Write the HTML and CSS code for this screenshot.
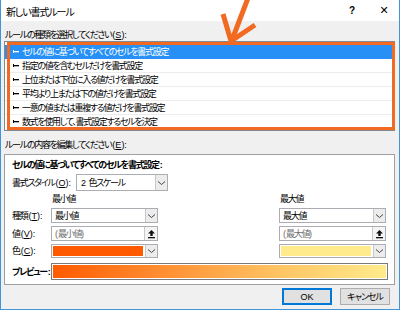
FILE: index.html
```html
<!DOCTYPE html>
<html lang="ja">
<head>
<meta charset="utf-8">
<link rel="stylesheet" href="styles.css">
</head>
<body>
<div class="window">
  <div class="titlebar">
    <span class="title">新しい書式ルール</span>
    <span class="help">?</span>
    <span class="close">✕</span>
  </div>
  <div class="body">
    <div class="label first">ルールの種類を選択してください<span class="lat">(<u>S</u>):</span></div>
    <div class="list-wrap">
      <div class="listbox">
        <div class="row selected"><svg class="bullet" width="6" height="5" viewBox="0 0 6 5"><rect x="0" y="1" width="1" height="3" fill="currentColor"/><rect x="0" y="2" width="6" height="1.3" fill="currentColor"/></svg>セルの値に基づいてすべてのセルを書式設定</div>
        <div class="row"><svg class="bullet" width="6" height="5" viewBox="0 0 6 5"><rect x="0" y="1" width="1" height="3" fill="currentColor"/><rect x="0" y="2" width="6" height="1.3" fill="currentColor"/></svg>指定の値を含むセルだけを書式設定</div>
        <div class="row"><svg class="bullet" width="6" height="5" viewBox="0 0 6 5"><rect x="0" y="1" width="1" height="3" fill="currentColor"/><rect x="0" y="2" width="6" height="1.3" fill="currentColor"/></svg>上位または下位に入る値だけを書式設定</div>
        <div class="row"><svg class="bullet" width="6" height="5" viewBox="0 0 6 5"><rect x="0" y="1" width="1" height="3" fill="currentColor"/><rect x="0" y="2" width="6" height="1.3" fill="currentColor"/></svg>平均より上または下の値だけを書式設定</div>
        <div class="row"><svg class="bullet" width="6" height="5" viewBox="0 0 6 5"><rect x="0" y="1" width="1" height="3" fill="currentColor"/><rect x="0" y="2" width="6" height="1.3" fill="currentColor"/></svg>一意の値または重複する値だけを書式設定</div>
        <div class="row last"><svg class="bullet" width="6" height="5" viewBox="0 0 6 5"><rect x="0" y="1" width="1" height="3" fill="currentColor"/><rect x="0" y="2" width="6" height="1.3" fill="currentColor"/></svg>数式を使用して、書式設定するセルを決定</div>
      </div>
      <div class="highlight"></div>
    </div>
    <div class="label second">ルールの内容を編集してください<span class="lat">(<u>E</u>):</span></div>
    <div class="panel">
      <div class="heading">セルの値に基づいてすべてのセルを書式設定<span class="lat">:</span></div>
      <div class="style-row">
        <span class="style-label">書式スタイル<span class="lat">(<u>O</u>):</span></span>
        <div class="combo style-combo"><span class="combo-text"><span class="lat">2 </span>色スケール</span><span class="chev"><svg width="9" height="6" viewBox="0 0 9 6"><path d="M1 1.5 L4.5 4.5 L8 1.5" fill="none" stroke="#444" stroke-width="1"/></svg></span></div>
      </div>
      <div class="grid">
        <span></span>
        <span class="colhead">最小値</span>
        <span></span>
        <span class="colhead">最大値</span>

        <span class="rowlabel">種類<span class="lat">(<u>T</u>):</span></span>
        <div class="combo"><span class="combo-text">最小値</span><span class="chev"><svg width="9" height="6" viewBox="0 0 9 6"><path d="M1 1.5 L4.5 4.5 L8 1.5" fill="none" stroke="#444" stroke-width="1"/></svg></span></div>
        <span></span>
        <div class="combo"><span class="combo-text">最大値</span><span class="chev"><svg width="9" height="6" viewBox="0 0 9 6"><path d="M1 1.5 L4.5 4.5 L8 1.5" fill="none" stroke="#444" stroke-width="1"/></svg></span></div>

        <span class="rowlabel">値<span class="lat">(<u>V</u>):</span></span>
        <div class="combo input"><span class="combo-text ph"><span class="lat">(</span>最小値<span class="lat">)</span></span><span class="upbtn"><svg width="9" height="10" viewBox="0 0 9 10"><path d="M4.5 1 L1 4.5 H3.3 V7 H5.7 V4.5 H8 Z" fill="#111"/><rect x="1" y="8" width="7" height="1.3" fill="#111"/></svg></span></div>
        <span></span>
        <div class="combo input"><span class="combo-text ph"><span class="lat">(</span>最大値<span class="lat">)</span></span><span class="upbtn"><svg width="9" height="10" viewBox="0 0 9 10"><path d="M4.5 1 L1 4.5 H3.3 V7 H5.7 V4.5 H8 Z" fill="#111"/><rect x="1" y="8" width="7" height="1.3" fill="#111"/></svg></span></div>

        <span class="rowlabel">色<span class="lat">(<u>C</u>):</span></span>
        <div class="combo color"><span class="swatch min"></span><span class="chev"><svg width="9" height="6" viewBox="0 0 9 6"><path d="M1 1.5 L4.5 4.5 L8 1.5" fill="none" stroke="#444" stroke-width="1"/></svg></span></div>
        <span></span>
        <div class="combo color"><span class="swatch max"></span><span class="chev"><svg width="9" height="6" viewBox="0 0 9 6"><path d="M1 1.5 L4.5 4.5 L8 1.5" fill="none" stroke="#444" stroke-width="1"/></svg></span></div>
      </div>
      <div class="preview-row">
        <span class="preview-label">プレビュー<span class="lat">:</span></span>
        <div class="preview-bar"><div class="gradient"></div></div>
      </div>
    </div>
    <div class="buttons">
      <button class="btn default">OK</button>
      <button class="btn">キャンセル</button>
    </div>
  </div>
  <svg class="callout" width="60" height="50" viewBox="200 0 60 50">
    <g fill="none" stroke="#f26a21" stroke-width="5" stroke-linecap="butt" stroke-linejoin="miter">
      <path d="M247 -2 L231 40"/>
      <path d="M222 14 L230 41 L254 25"/>
    </g>
  </svg>
</div>
</body>
</html>
```

FILE: styles.css
```css
* { box-sizing: border-box; }
html, body { margin: 0; padding: 0; }
body {
  width: 400px;
  height: 310px;
  overflow: hidden;
  font-family: "Noto Sans CJK JP", "Noto Sans", sans-serif;
  font-feature-settings: "palt";
  font-size: 9px;
  letter-spacing: -1.3px;
  color: #000;
}
.lat { letter-spacing: 0; font-family: "Liberation Sans", "Noto Sans CJK JP", sans-serif; padding-left: 1px; }
u { text-decoration: underline; text-underline-offset: 1px; }
.window {
  position: relative;
  width: 400px;
  height: 310px;
  border: 1px solid #3e95dc;
  border-top: none;
  background: #f0f0f0;
  display: flex;
  flex-direction: column;
}
.titlebar {
  height: 21px;
  background: #fff;
  display: flex;
  align-items: center;
  padding: 0 0 0 5px;
}
.title { font-size: 10px; letter-spacing: -1.1px; flex: 1; padding-top: 1px; white-space: nowrap; }
.help { width: 30px; text-align: center; font-size: 10px; letter-spacing: 0; font-family: "Liberation Sans", sans-serif; font-weight: bold; margin-right: 2px; }
.close { width: 30px; text-align: center; font-size: 11px; letter-spacing: 0; font-family: "DejaVu Sans", sans-serif; }
.body {
  flex: 1;
  display: flex;
  flex-direction: column;
  padding: 0 3px 0 3px;
}
.label { height: 12px; line-height: 12px; padding-left: 1px; white-space: nowrap; }
.label.first { margin-top: 8px; }
.list-wrap { position: relative; width: 391px; }
.listbox {
  background: #fff;
  border: 1px solid #828790;
  height: 90px;
  padding-top: 3px;
}
.row {
  height: 14px;
  line-height: 13px;
  padding-left: 8px;
  border-bottom: 1px solid #ececec;
  white-space: nowrap;
}
.row.last { border-bottom: none; }
.row.selected { background: #2690f6; color: #fff; border-bottom-color: #2690f6; }
.bullet { display: inline-block; margin-right: 3px; vertical-align: 1px; }
.highlight {
  position: absolute;
  left: 3px;
  top: 1px;
  width: 388px;
  height: 88px;
  border: 3px solid #f26a21;
}
.label.second { margin-top: 8px; }
.panel {
  margin-top: 3px;
  width: 391px;
  height: 131px;
  background: #fff;
  border: 1px solid #a0a0a0;
  padding: 4px 0 0 7px;
  display: flex;
  flex-direction: column;
}
.heading { font-weight: bold; height: 12px; line-height: 12px; white-space: nowrap; }
.heading .lat, .preview-label .lat { font-weight: bold; }
.style-row { display: flex; align-items: center; margin-top: 3px; height: 17px; }
.style-label { width: 64px; white-space: nowrap; }
.combo {
  height: 15px;
  border: 1px solid #abadb3;
  background: #fff;
  display: flex;
  align-items: stretch;
}
.style-combo { width: 92px; height: 17px; }
.combo-text { flex: 1; padding-left: 3px; line-height: 13px; white-space: nowrap; overflow: hidden; }
.combo-text .lat { padding-left: 0; }
.style-combo .combo-text { line-height: 15px; padding-left: 4px; }
.combo-text.ph { color: #6d6d6d; }
.chev {
  width: 12px;
  background: #ececec;
  border-left: 1px solid #c8c8c8;
  display: flex;
  align-items: center;
  justify-content: center;
}
.upbtn {
  width: 13px;
  border-left: 1px solid #c8c8c8;
  background: #f4f4f4;
  display: flex;
  align-items: center;
  justify-content: center;
}
.grid {
  display: grid;
  grid-template-columns: 39px 107px 121px 107px;
  grid-template-rows: 12px 15px 15px 14px;
  row-gap: 3px;
  margin-top: 2px;
  align-items: center;
}
.grid .colhead { padding-left: 1px; line-height: 12px; white-space: nowrap; }
.grid .rowlabel { line-height: 15px; white-space: nowrap; }
.combo.color { height: 14px; }
.swatch { flex: 1; margin: 1px 2px 1px 1px; }
.swatch.min { background: #ff5a00; }
.swatch.max { background: #ffeb8c; }
.preview-row { display: flex; align-items: center; margin-top: 5px; height: 17px; }
.preview-label { width: 39px; font-weight: bold; white-space: nowrap; }
.preview-bar {
  width: 337px;
  height: 17px;
  border: 1px solid #7a7a7a;
  padding: 1px;
  background: #fff;
}
.gradient {
  height: 100%;
  background: linear-gradient(to right, #ff5a00 0%, #ff8a2e 30%, #ffc060 65%, #ffeb8c 100%);
}
.buttons {
  display: flex;
  justify-content: flex-end;
  gap: 8px;
  margin-top: 3px;
  padding-right: 6px;
}
.btn {
  font-family: inherit;
  font-feature-settings: "palt";
  font-size: 9px;
  letter-spacing: -1px;
  width: 50px;
  height: 17px;
  padding: 0;
  background: #e1e1e1;
  border: 1px solid #adadad;
  color: #000;
  line-height: 14px;
}
.btn.default { border: 2px solid #0078d7; letter-spacing: 0; font-family: "Liberation Sans", sans-serif; }
.callout {
  position: absolute;
  left: 200px;
  top: 0;
}
```
